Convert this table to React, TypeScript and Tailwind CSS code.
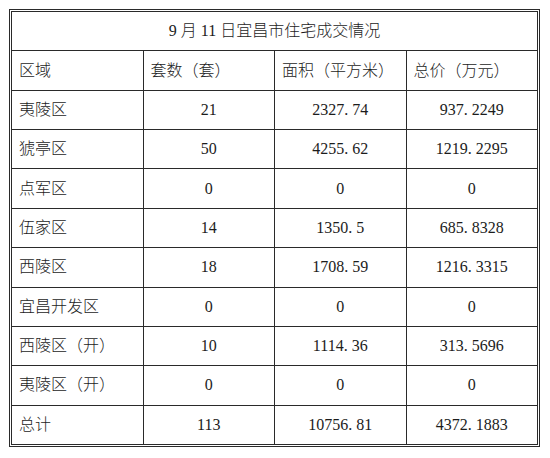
const rows: [string, string, string, string][] = [
  ['夷陵区', '21', '2327.74', '937.2249'],
  ['猇亭区', '50', '4255.62', '1219.2295'],
  ['点军区', '0', '0', '0'],
  ['伍家区', '14', '1350.5', '685.8328'],
  ['西陵区', '18', '1708.59', '1216.3315'],
  ['宜昌开发区', '0', '0', '0'],
  ['西陵区（开）', '10', '1114.36', '313.5696'],
  ['夷陵区（开）', '0', '0', '0'],
  ['总计', '113', '10756.81', '4372.1883'],
]

const headers = ['区域', '套数（套）', '面积（平方米）', '总价（万元）']

function Num({ value }: { value: string }) {
  const [int, dec] = value.split('.')
  if (dec === undefined) return <>{int}</>
  return (
    <>
      {int}
      <span className="mr-[4px]">.</span>
      {dec}
    </>
  )
}

export default function App() {
  return (
    <div className="h-[458px] w-[550px] bg-white pl-[9px] pt-[9px] font-['Liberation_Serif','Noto_Sans_CJK_SC',serif] text-[16px] font-light leading-none text-[#1c1c1c]">
      <div className="h-[438px] w-[531px] border border-[#2a2a2a] p-px">
        <div className="grid h-full grid-cols-4 grid-rows-11 gap-px border border-[#2a2a2a] bg-[#2a2a2a]">
          <div className="col-span-4 flex items-center justify-center bg-white">9 月 11 日宜昌市住宅成交情况</div>

          {headers.map((h) => (
            <div key={h} className="flex items-center bg-white pl-[7px]">
              {h}
            </div>
          ))}

          {rows.map(([area, sets, size, price]) => (
            <div key={area} className="contents">
              <div className="flex items-center bg-white pl-[7px]">{area}</div>
              <div className="flex items-center justify-center bg-white">
                <Num value={sets} />
              </div>
              <div className="flex items-center justify-center bg-white">
                <Num value={size} />
              </div>
              <div className="flex items-center justify-center bg-white">
                <Num value={price} />
              </div>
            </div>
          ))}
        </div>
      </div>
    </div>
  )
}
